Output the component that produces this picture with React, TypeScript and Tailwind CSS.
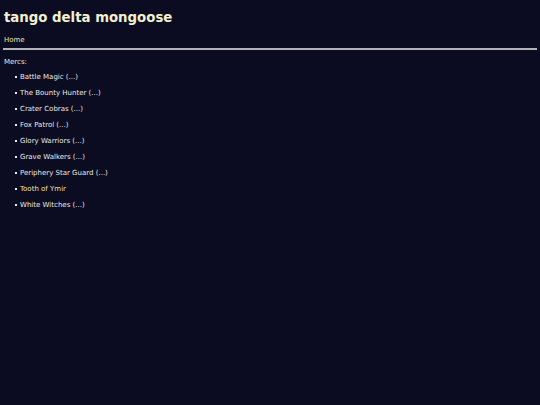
const mercs = [
	{ name: "Battle Magic", more: true },
	{ name: "The Bounty Hunter", more: true },
	{ name: "Crater Cobras", more: true },
	{ name: "Fox Patrol", more: true },
	{ name: "Glory Warriors", more: true },
	{ name: "Grave Walkers", more: true },
	{ name: "Periphery Star Guard", more: true },
	{ name: "Tooth of Ymir", more: false },
	{ name: "White Witches", more: true },
]

export default function App() {
	return (
		<div className="min-h-[405px] bg-[#0b0c21] px-[3px] pt-[10px] text-[7px] text-[#ecebe4] font-['DejaVu_Sans',sans-serif]">
			<h1 className="pl-px text-[13.3px] font-bold leading-[16px] text-[#f3efcf]">tango delta mongoose</h1>
			<div className="mt-[9px] pl-px leading-[10px]">
				<a className="text-[#ebe3a6]">Home</a>
			</div>
			<hr className="mt-[3px] border-t-2 border-[#b4b4b8]" />
			<div className="mt-[7px] pl-px leading-[10px]">Mercs:</div>
			<ul className="mt-[5px] flex flex-col gap-[6px] pl-[12px]">
				{mercs.map((m) => (
					<li key={m.name} className="flex items-center leading-[10px]">
						<span className="mr-[3px] h-[2px] w-[2px] bg-[#ecebe4]" />
						{m.more ? (
							<span>{m.name} (...)</span>
						) : (
							<a className="text-[#ebe3a6]">{m.name}</a>
						)}
					</li>
				))}
			</ul>
		</div>
	)
}
